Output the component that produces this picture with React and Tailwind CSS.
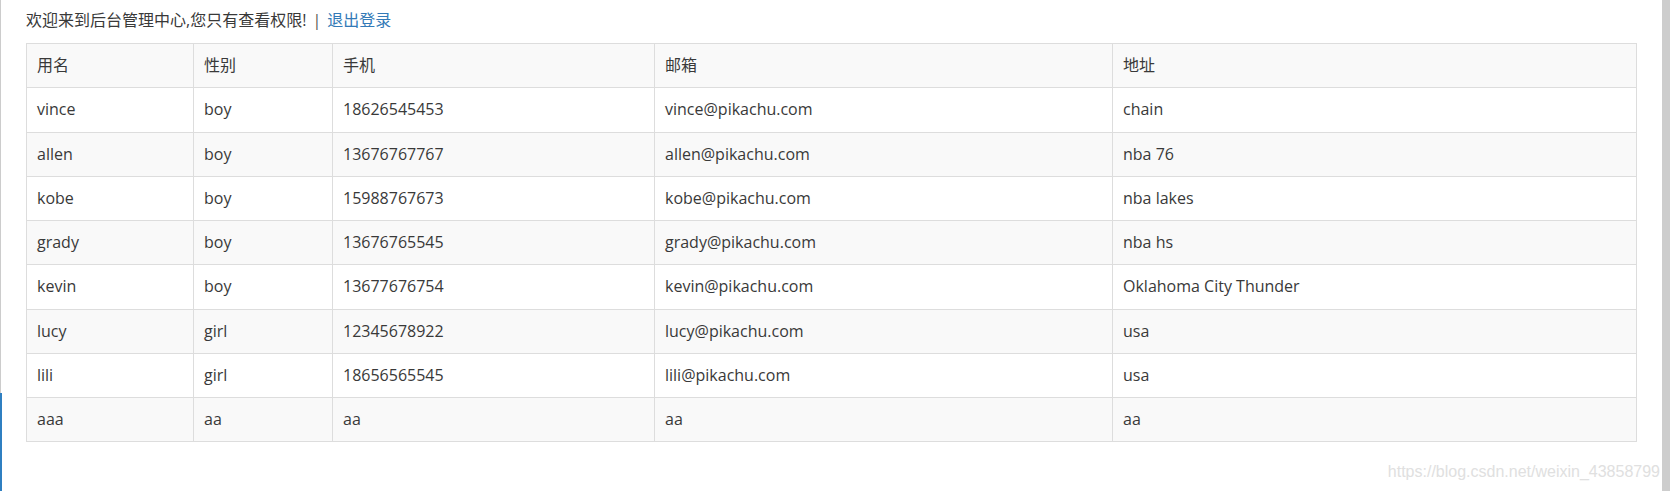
const rows = [
  { name: "vince", sex: "boy", phone: "18626545453", email: "vince@pikachu.com", address: "chain" },
  { name: "allen", sex: "boy", phone: "13676767767", email: "allen@pikachu.com", address: "nba 76" },
  { name: "kobe", sex: "boy", phone: "15988767673", email: "kobe@pikachu.com", address: "nba lakes" },
  { name: "grady", sex: "boy", phone: "13676765545", email: "grady@pikachu.com", address: "nba hs" },
  { name: "kevin", sex: "boy", phone: "13677676754", email: "kevin@pikachu.com", address: "Oklahoma City Thunder" },
  { name: "lucy", sex: "girl", phone: "12345678922", email: "lucy@pikachu.com", address: "usa" },
  { name: "lili", sex: "girl", phone: "18656565545", email: "lili@pikachu.com", address: "usa" },
  { name: "aaa", sex: "aa", phone: "aa", email: "aa", address: "aa" },
];

const headers = ["用名", "性别", "手机", "邮箱", "地址"];

const cell = "border border-[#dddddd] px-[10px] py-[10px] leading-[23.25px] text-left font-normal align-middle";

function App() {
  return (
    <div className="relative flex h-[491px] w-full overflow-hidden bg-white text-[#393939] font-['Open_Sans','Noto_Sans_CJK_SC',sans-serif]">
      {/* sidebar edge */}
      <div className="flex w-[2px] flex-col">
        <div className="h-[393px] border-l border-[#cccccc]" />
        <div className="flex-1 bg-[#2f7fc1]" />
      </div>

      <div className="flex-1 pl-[24px]">
        <p className="mt-[8px] mb-[11px] text-[16px] leading-[24px]">
          欢迎来到后台管理中心,您只有查看权限!
          <span className="mx-[6px] text-[#555555]">|</span>
          <a href="#" className="text-[#337ab7]">退出登录</a>
        </p>

        <table className="w-[1611px] table-fixed border-collapse text-[16px]">
          <colgroup>
            <col className="w-[167px]" />
            <col className="w-[139px]" />
            <col className="w-[322px]" />
            <col className="w-[458px]" />
            <col />
          </colgroup>
          <thead>
            <tr className="bg-[#f9f9f9]">
              {headers.map((h) => (
                <th key={h} className={cell}>
                  {h}
                </th>
              ))}
            </tr>
          </thead>
          <tbody>
            {rows.map((r, i) => (
              <tr key={r.name} className={i % 2 === 1 ? "bg-[#f9f9f9]" : "bg-white"}>
                <td className={cell}>{r.name}</td>
                <td className={cell}>{r.sex}</td>
                <td className={cell}>{r.phone}</td>
                <td className={cell}>{r.email}</td>
                <td className={cell}>{r.address}</td>
              </tr>
            ))}
          </tbody>
        </table>
      </div>

      {/* scrollbar */}
      <div className="w-[8px] bg-[#cdcdcd]" />

      <span className="absolute right-[10px] bottom-[9px] text-[16px] leading-[20px] text-[#e0e0e0] font-['Liberation_Sans',sans-serif]">
        https://blog.csdn.net/weixin_43858799
      </span>
    </div>
  );
}

export default App;
